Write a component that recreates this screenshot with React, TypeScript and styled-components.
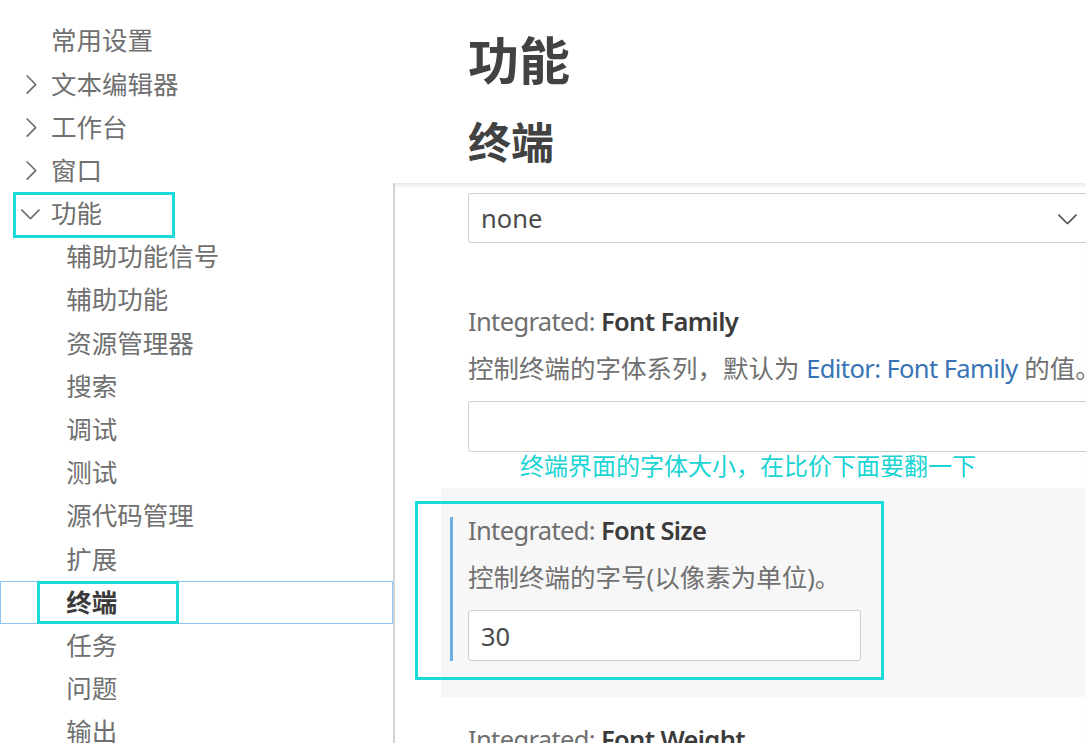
import React from "react";
import styled, { createGlobalStyle } from "styled-components";

const Global = createGlobalStyle`
  html, body { margin: 0; padding: 0; background: #ffffff; overflow: hidden; }
  body { font-family: "Noto Sans", "Noto Sans CJK SC", sans-serif; }
  #root { width: 1086px; height: 743px; }
`;

const CYAN = "#1adada";

const Page = styled.div`
  position: relative;
  width: 1086px;
  height: 743px;
  overflow: hidden;
  display: grid;
  grid-template-columns: 393px 1fr;
  background: #fff;
`;

const Sidebar = styled.nav`
  display: flex;
  flex-direction: column;
  padding-top: 19.5px;
`;

const Row = styled.div<{ $depth: number; $selected?: boolean }>`
  height: 43.2px;
  flex: none;
  display: flex;
  align-items: center;
  gap: 5px;
  padding-left: ${(p) => 15 + p.$depth * 15.3}px;
  font-size: 25.5px;
  line-height: 1;
  white-space: nowrap;
  color: ${(p) => (p.$selected ? "#3a3a3a" : "#707070")};
  font-weight: ${(p) => (p.$selected ? 700 : 400)};
  outline: ${(p) => (p.$selected ? "1px solid #92c3f6" : "none")};
  outline-offset: -1px;
`;

const Twistie = styled.span`
  width: 31px;
  height: 31px;
  flex: none;
  display: flex;
`;

const Main = styled.main`
  display: flex;
  flex-direction: column;
  min-width: 0;
  overflow: hidden;
`;

const Header = styled.header`
  height: 183px;
  flex: none;
  box-sizing: border-box;
  padding: 32.5px 0 0 75px;
  font-family: "Noto Sans CJK SC", sans-serif;
  color: #424242;
`;

const H1 = styled.h1`
  margin: 0;
  font-size: 51px;
  line-height: 1;
  font-weight: 700;
`;

const H2 = styled.h2`
  margin: 35px 0 0;
  font-size: 43px;
  line-height: 1;
  font-weight: 700;
`;

const Body = styled.section`
  flex: 1;
  display: flex;
  flex-direction: column;
  border-left: 2px solid #d4d4d4;
  box-shadow: inset 0 5px 5px -3px #e4e4e4;
  overflow: hidden;
`;

const Item = styled.div<{ $focused?: boolean; $partial?: boolean }>`
  margin-left: 46px;
  display: flex;
  gap: 15px;
  padding: ${(p) => (p.$partial ? 10 : 24)}px 0 36px 9px;
  background: ${(p) => (p.$focused ? "#f7f7f7" : "transparent")};
`;

const Indicator = styled.div<{ $on?: boolean }>`
  width: 3px;
  flex: none;
  margin-top: 5px;
  background: ${(p) => (p.$on ? "#6cb0e3" : "transparent")};
`;

const Content = styled.div`
  display: flex;
  flex-direction: column;
  min-width: 0;
`;

const Title = styled.div`
  font-size: 25.5px;
  line-height: 36px;
  letter-spacing: -0.65px;
  color: #6f6f6f;
  white-space: nowrap;
`;

const Key = styled.span`
  color: #3b3b3b;
  font-weight: 600;
`;

const Desc = styled.div`
  margin-top: 11px;
  font-size: 25.5px;
  line-height: 36px;
  color: #717171;
  white-space: nowrap;
`;

const Link = styled.span`
  color: #3874b5;
  letter-spacing: -0.6px;
`;

const TextBox = styled.input<{ $w: number }>`
  margin-top: 15px;
  width: ${(p) => p.$w}px;
  height: 51px;
  box-sizing: border-box;
  border: 1px solid #cecece;
  border-radius: 3px;
  background: #fff;
  padding: 0 12px;
  font-family: "Noto Sans", "Noto Sans CJK SC", sans-serif;
  font-size: 25.5px;
  color: #4a4a4a;
  outline: none;
`;

const Select = styled.div<{ $w: number }>`
  width: ${(p) => p.$w}px;
  height: 50px;
  box-sizing: border-box;
  border: 1px solid #cecece;
  border-radius: 3px;
  background: #fff;
  padding: 0 24px 0 12px;
  display: flex;
  align-items: center;
  justify-content: space-between;
  font-size: 25.5px;
  color: #4a4a4a;
`;

const Mark = styled.div<{ $l: number; $t: number; $w: number; $h: number }>`
  position: absolute;
  left: ${(p) => p.$l}px;
  top: ${(p) => p.$t}px;
  width: ${(p) => p.$w}px;
  height: ${(p) => p.$h}px;
  box-sizing: border-box;
  border: 3px solid ${CYAN};
  pointer-events: none;
`;

const Note = styled.div`
  position: absolute;
  left: 520px;
  top: 449px;
  font-family: "Noto Sans CJK SC", sans-serif;
  font-size: 24px;
  line-height: 32px;
  color: #1ad4d4;
  white-space: nowrap;
`;

const ChevronRight = ({ color = "#6f6f6f" }: { color?: string }) => (
  <svg width="31" height="31" viewBox="0 0 16 16">
    <path
      fill={color}
      d="M10.072 8.024L5.715 3.667l.618-.62L11 7.716v.618L6.333 13l-.618-.619 4.357-4.357z"
    />
  </svg>
);

const ChevronDown = ({ color = "#6f6f6f" }: { color?: string }) => (
  <svg width="31" height="31" viewBox="0 0 16 16">
    <path
      fill={color}
      d="M7.976 10.072l4.357-4.357.62.618L8.284 11h-.618L3 6.333l.619-.618 4.357 4.357z"
    />
  </svg>
);

type TocItem = { label: string; depth: number; twistie?: "right" | "down"; selected?: boolean };

const toc: TocItem[] = [
  { label: "常用设置", depth: 0 },
  { label: "文本编辑器", depth: 0, twistie: "right" },
  { label: "工作台", depth: 0, twistie: "right" },
  { label: "窗口", depth: 0, twistie: "right" },
  { label: "功能", depth: 0, twistie: "down" },
  { label: "辅助功能信号", depth: 1 },
  { label: "辅助功能", depth: 1 },
  { label: "资源管理器", depth: 1 },
  { label: "搜索", depth: 1 },
  { label: "调试", depth: 1 },
  { label: "测试", depth: 1 },
  { label: "源代码管理", depth: 1 },
  { label: "扩展", depth: 1 },
  { label: "终端", depth: 1, selected: true },
  { label: "任务", depth: 1 },
  { label: "问题", depth: 1 },
  { label: "输出", depth: 1 },
];

export default function App() {
  return (
    <>
      <Global />
      <Page>
        <Sidebar>
          {toc.map((t) => (
            <Row key={t.label} $depth={t.depth} $selected={t.selected}>
              <Twistie>
                {t.twistie === "right" && <ChevronRight />}
                {t.twistie === "down" && <ChevronDown />}
              </Twistie>
              <span>{t.label}</span>
            </Row>
          ))}
        </Sidebar>
        <Main>
          <Header>
            <H1>功能</H1>
            <H2>终端</H2>
          </Header>
          <Body>
            <Item $partial>
              <Indicator />
              <Content>
                <Select $w={640}>
                  <span>none</span>
                  <ChevronDown color="#555" />
                </Select>
              </Content>
            </Item>
            <Item>
              <Indicator />
              <Content>
                <Title>
                  Integrated: <Key>Font Family</Key>
                </Title>
                <Desc>
                  控制终端的字体系列，默认为 <Link>Editor: Font Family</Link> 的值。
                </Desc>
                <TextBox $w={640} readOnly value="" />
              </Content>
            </Item>
            <Item $focused>
              <Indicator $on />
              <Content>
                <Title>
                  Integrated: <Key>Font Size</Key>
                </Title>
                <Desc>控制终端的字号(以像素为单位)。</Desc>
                <TextBox $w={393} readOnly value="30" />
              </Content>
            </Item>
            <Item>
              <Indicator />
              <Content>
                <Title>
                  Integrated: <Key>Font Weight</Key>
                </Title>
                <Desc>要在终端中用于非粗体文本的字体粗细。</Desc>
              </Content>
            </Item>
          </Body>
        </Main>
        <Mark $l={13} $t={192} $w={162} $h={46} />
        <Mark $l={37} $t={581} $w={142} $h={43} />
        <Mark $l={415} $t={501} $w={469} $h={179} />
        <Note>终端界面的字体大小，在比价下面要翻一下</Note>
      </Page>
    </>
  );
}
